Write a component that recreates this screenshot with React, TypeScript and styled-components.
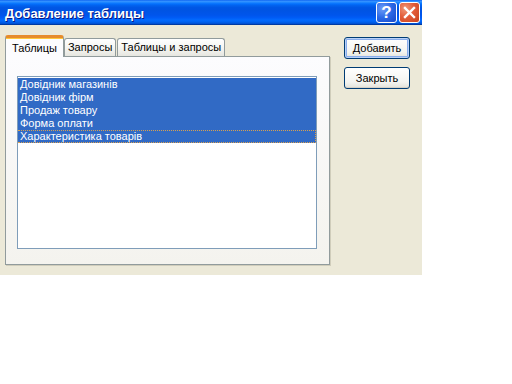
import React from "react";
import styled, { createGlobalStyle } from "styled-components";

const GlobalStyle = createGlobalStyle`
  html, body {
    margin: 0;
    padding: 0;
    background: #ffffff;
  }
  body {
    font-family: Tahoma, "Liberation Sans", "DejaVu Sans", sans-serif;
    font-size: 11px;
  }
`;

const tabs = ["Таблицы", "Запросы", "Таблицы и запросы"];
const items = [
  "Довідник магазинів",
  "Довідник фірм",
  "Продаж товару",
  "Форма оплати",
  "Характеристика товарів",
];

export default function App() {
  return (
    <>
      <GlobalStyle />
      <Window>
        <TitleBar>
          <Title>Добавление таблицы</Title>
          <TitleButtons>
            <CaptionButton kind="help">?</CaptionButton>
            <CaptionButton kind="close">
              <svg width="13" height="13" viewBox="0 0 13 13">
                <path d="M2 2 L11 11 M11 2 L2 11" stroke="#fff" strokeWidth="2.4" strokeLinecap="square" />
              </svg>
            </CaptionButton>
          </TitleButtons>
        </TitleBar>
        <Body>
          <TabArea>
            <TabStrip>
              {tabs.map((t, i) => (
                <Tab key={t} active={i === 0}>
                  {t}
                </Tab>
              ))}
            </TabStrip>
            <Panel>
              <ListBox>
                {items.map((it, i) => (
                  <ListItem key={it} focused={i === items.length - 1}>
                    {it}
                  </ListItem>
                ))}
              </ListBox>
            </Panel>
          </TabArea>
          <ButtonColumn>
            <Button primary>Добавить</Button>
            <Button>Закрыть</Button>
          </ButtonColumn>
        </Body>
      </Window>
    </>
  );
}

const Window = styled.div`
  width: 422px;
  height: 275px;
  display: flex;
  flex-direction: column;
  background: #ece9d8;
`;

const TitleBar = styled.div`
  height: 25px;
  flex: none;
  display: flex;
  align-items: center;
  justify-content: space-between;
  padding: 0 2px 0 5px;
  box-sizing: border-box;
  background: linear-gradient(
    to bottom,
    #0058ee 0%,
    #3a93ff 4%,
    #288eff 8%,
    #127dff 12%,
    #036ffc 16%,
    #0262ee 22%,
    #0057e5 30%,
    #0054e3 40%,
    #0055eb 60%,
    #005bf5 70%,
    #026afe 80%,
    #0062ef 88%,
    #0052d6 94%,
    #0040ab 97%,
    #003092 100%
  );
`;

const Title = styled.div`
  color: #ffffff;
  font-family: "Liberation Sans", "DejaVu Sans", sans-serif;
  font-weight: bold;
  font-size: 13px;
  text-shadow: 1px 1px 0 #0a1883;
  padding-top: 1px;
`;

const TitleButtons = styled.div`
  display: flex;
  gap: 2px;
`;

const CaptionButton = styled.div<{ kind: "help" | "close" }>`
  width: 21px;
  height: 21px;
  box-sizing: border-box;
  border: 1px solid #ffffff;
  border-radius: 3px;
  display: flex;
  align-items: center;
  justify-content: center;
  color: #ffffff;
  font-family: "Liberation Sans", sans-serif;
  font-weight: bold;
  font-size: 17px;
  background: ${(p) =>
    p.kind === "close"
      ? "radial-gradient(circle at 30% 30%, #f09a7a 0%, #e35d3a 45%, #c8421c 100%)"
      : "radial-gradient(circle at 30% 30%, #6d9df7 0%, #2a68e6 50%, #1748c8 100%)"};
`;

const Body = styled.div`
  flex: 1;
  display: flex;
  padding: 9px 0 0 5px;
`;

const TabArea = styled.div`
  display: flex;
  flex-direction: column;
  width: 325px;
`;

const TabStrip = styled.div`
  display: flex;
  align-items: flex-end;
  height: 22px;
  position: relative;
  z-index: 1;
`;

const Tab = styled.div<{ active?: boolean }>`
  box-sizing: border-box;
  height: ${(p) => (p.active ? "22px" : "18px")};
  padding: ${(p) => (p.active ? "4px 6px 0" : "2px 3px 0")};
  margin-right: ${(p) => (p.active ? "0" : "1px")};
  border: 1px solid #919b9c;
  border-bottom: none;
  border-top: ${(p) => (p.active ? "3px solid #ffc83c" : "1px solid #919b9c")};
  border-radius: 3px 3px 0 0;
  color: #000000;
  white-space: nowrap;
  background: ${(p) =>
    p.active ? "#fcfcfe" : "linear-gradient(to bottom, #ffffff 0%, #f3f3ef 60%, #e6e6e0 100%)"};
  margin-bottom: ${(p) => (p.active ? "-1px" : "0")};
  ${(p) => (p.active ? "border-top-color: #e68b2c; box-shadow: inset 0 1px 0 #ffc83c;" : "")}
`;

const Panel = styled.div`
  box-sizing: border-box;
  height: 209px;
  border: 1px solid #919b9c;
  box-shadow: 1px 1px 0 #d0cdbb;
  background: linear-gradient(to bottom, #fcfcfe 0%, #f4f3ee 100%);
  padding: 19px 12px 15px 11px;
`;

const ListBox = styled.div`
  box-sizing: border-box;
  height: 173px;
  border: 1px solid #7f9db9;
  background: #ffffff;
  padding-top: 1px;
`;

const ListItem = styled.div<{ focused?: boolean }>`
  box-sizing: border-box;
  height: 13px;
  line-height: 11px;
  padding-left: 2px;
  background: #316ac5;
  color: #ffffff;
  white-space: nowrap;
  border: 1px dotted ${(p) => (p.focused ? "#d8a050" : "transparent")};
  border-left: none;
  border-right: ${(p) => (p.focused ? "1px dotted #d8a050" : "none")};
`;

const ButtonColumn = styled.div`
  display: flex;
  flex-direction: column;
  gap: 8px;
  padding: 3px 0 0 14px;
`;

const Button = styled.div<{ primary?: boolean }>`
  box-sizing: border-box;
  width: 66px;
  height: 22px;
  border: 1px solid #003c74;
  border-radius: 3px;
  display: flex;
  align-items: center;
  justify-content: center;
  color: #000000;
  background: linear-gradient(to bottom, #ffffff 0%, #f4f4f0 70%, #e3e2da 100%);
  box-shadow: ${(p) =>
    p.primary ? "inset 0 0 0 1px #b9d1f8, inset 0 0 0 2px #89adec" : "inset 0 -1px 0 #d6d0c5"};
`;
